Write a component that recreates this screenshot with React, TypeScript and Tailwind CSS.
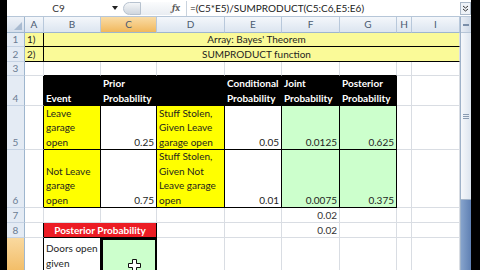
import React from 'react';

const GR = 'border-r-[#d9dde3]';
const GB = 'border-b-[#d9dde3]';
const KR = 'border-r-black';
const KB = 'border-b-black';

interface CellProps {
    r?: string;
    b?: string;
    className?: string;
    children?: React.ReactNode;
}

const Cell: React.FC<CellProps> = ({ r = GR, b = GB, className = '', children }) => (
    <div className={`border-r border-b overflow-hidden flex flex-col justify-end px-[2px] leading-[14.5px] ${r} ${b} ${className}`}>
        {children}
    </div>
);

const RowHead: React.FC<{ n?: string; active?: boolean }> = ({ n, active }) => (
    <div
        className={`border-r border-b border-r-[#9eb6ce] border-b-[#c5d2e3] flex items-end justify-center text-[10px] leading-[14px] text-[#6b7c93] ${
            active ? 'bg-gradient-to-b from-[#f9d99f] to-[#f1b85b]' : 'bg-[#e4ebf4]'
        }`}
    >
        {n}
    </div>
);

const ColHead: React.FC<{ n: string; active?: boolean }> = ({ n, active }) => (
    <div
        className={`border-r border-b border-r-[#b8c8db] border-b-[#9eb6ce] flex items-center justify-center text-[10px] text-[#4a5a70] ${
            active ? 'bg-gradient-to-b from-[#f9dca5] to-[#f1b85b]' : 'bg-gradient-to-b from-[#f4f7fb] to-[#dce5f0]'
        }`}
    >
        {n}
    </div>
);

const Lines: React.FC<{ lines: string[] }> = ({ lines }) => (
    <>
        {lines.map((l, i) => (
            <div key={i} className="whitespace-nowrap">{l}</div>
        ))}
    </>
);

export default function App() {
    return (
        <div
            className="w-[480px] h-[270px] overflow-hidden bg-black flex text-[#1e1e1e]"
            style={{ fontFamily: 'Lato, "Open Sans", sans-serif' }}
        >
            <div className="w-[7px] shrink-0" />
            <div className="w-[464px] shrink-0 flex flex-col bg-white">
                {/* formula bar */}
                <div className="h-[17px] shrink-0 flex items-center border-b border-[#b6c6d8] bg-white">
                    <div className="w-[103px] text-center text-[10px] text-[#333]">C9</div>
                    <div className="w-[10px] flex justify-center">
                        <svg width="6" height="4" viewBox="0 0 6 4"><path d="M0 0h6L3 4z" fill="#222" /></svg>
                    </div>
                    <div className="ml-[3px] w-[18px] h-[13px] rounded-l-full border border-[#b7c2cf] bg-gradient-to-b from-[#f4f6f8] to-[#cfd6de]" />
                    <div className="w-[31px] h-[13px] bg-gradient-to-b from-[#fbfcfd] to-[#e9edf2]" />
                    <div className="w-[14px] text-[10px] italic font-bold text-[#5a5a5a] font-serif">fx</div>
                    <div className="w-px h-[15px] bg-[#c9d3de] mr-[3px]" />
                    <div className="text-[10px] text-[#222] whitespace-nowrap">=(C5*E5)/SUMPRODUCT(C5:C6,E5:E6)</div>
                    <div className="ml-auto w-[11px] h-[13px] border border-[#aab8c8] bg-[#eef2f7] flex items-center justify-center">
                        <svg width="7" height="7" viewBox="0 0 7 7">
                            <path d="M1 1l2.5 2 2.5-2M1 4l2.5 2 2.5-2" stroke="#333" strokeWidth="1" fill="none" />
                        </svg>
                    </div>
                </div>

                <div className="flex flex-1 min-h-0">
                    {/* sheet grid */}
                    <div className="w-[453px] shrink-0 grid grid-cols-[18px_19px_57px_56px_68px_57px_58px_57px_15px_48px] grid-rows-[16px_14px_15px_14px_30px_44px_58px_15px_15px_40px] text-[10px]">
                        {/* header */}
                        <div className="border-r border-b border-r-[#9eb6ce] border-b-[#9eb6ce] bg-gradient-to-b from-[#eef2f8] to-[#d5dfec] relative">
                            <svg className="absolute right-[2px] bottom-[2px]" width="8" height="8" viewBox="0 0 8 8"><path d="M8 0v8H0z" fill="#a9bbd1" /></svg>
                        </div>
                        <ColHead n="A" />
                        <ColHead n="B" />
                        <ColHead n="C" active />
                        <ColHead n="D" />
                        <ColHead n="E" />
                        <ColHead n="F" />
                        <ColHead n="G" />
                        <ColHead n="H" />
                        <ColHead n="I" />

                        {/* row 1 */}
                        <RowHead n="1" />
                        <Cell r={KR} b={KB} className="bg-[#fafa98]">1)</Cell>
                        <Cell b={KB} className="col-span-8 bg-[#fafa98] items-center pl-[12px]">Array: Bayes' Theorem</Cell>

                        {/* row 2 */}
                        <RowHead n="2" />
                        <Cell r={KR} b={KB} className="bg-[#fafa98]">2)</Cell>
                        <Cell b={KB} className="col-span-8 bg-[#fafa98] items-center pl-[12px]">SUMPRODUCT function</Cell>

                        {/* row 3 */}
                        <RowHead n="3" />
                        <Cell />
                        <Cell b={KB} />
                        <Cell b={KB} />
                        <Cell b={KB} />
                        <Cell b={KB} />
                        <Cell b={KB} />
                        <Cell b={KB} />
                        <Cell />
                        <Cell />

                        {/* row 4 */}
                        <RowHead n="4" />
                        <Cell r={KR} />
                        <Cell r={KR} b={KB} className="bg-black text-white font-bold">Event</Cell>
                        <Cell r={KR} b={KB} className="bg-black text-white font-bold"><Lines lines={['Prior', 'Probability']} /></Cell>
                        <Cell r={KR} b={KB} className="bg-black" />
                        <Cell r={KR} b={KB} className="bg-black text-white font-bold"><Lines lines={['Conditional', 'Probability']} /></Cell>
                        <Cell r={KR} b={KB} className="bg-black text-white font-bold"><Lines lines={['Joint', 'Probability']} /></Cell>
                        <Cell r={KR} b={KB} className="bg-black text-white font-bold"><Lines lines={['Posterior', 'Probability']} /></Cell>
                        <Cell />
                        <Cell />

                        {/* row 5 */}
                        <RowHead n="5" />
                        <Cell r={KR} />
                        <Cell r={KR} b={KB} className="bg-[#ffff00]"><Lines lines={['Leave', 'garage', 'open']} /></Cell>
                        <Cell r={KR} b={KB} className="items-end">0.25</Cell>
                        <Cell r={KR} b={KB} className="bg-[#ffff00]"><Lines lines={['Stuff Stolen,', 'Given Leave', 'garage open']} /></Cell>
                        <Cell r={KR} b={KB} className="items-end">0.05</Cell>
                        <Cell r={KR} b={KB} className="bg-[#ccffcc] items-end">0.0125</Cell>
                        <Cell r={KR} b={KB} className="bg-[#ccffcc] items-end">0.625</Cell>
                        <Cell />
                        <Cell />

                        {/* row 6 */}
                        <RowHead n="6" />
                        <Cell r={KR} />
                        <Cell r={KR} b={KB} className="bg-[#ffff00]"><Lines lines={['Not Leave', 'garage', 'open']} /></Cell>
                        <Cell r={KR} b={KB} className="items-end">0.75</Cell>
                        <Cell r={KR} b={KB} className="bg-[#ffff00]"><Lines lines={['Stuff Stolen,', 'Given Not', 'Leave garage', 'open']} /></Cell>
                        <Cell r={KR} b={KB} className="items-end">0.01</Cell>
                        <Cell r={KR} b={KB} className="bg-[#ccffcc] items-end">0.0075</Cell>
                        <Cell r={KR} b={KB} className="bg-[#ccffcc] items-end">0.375</Cell>
                        <Cell />
                        <Cell />

                        {/* row 7 */}
                        <RowHead n="7" />
                        <Cell />
                        <Cell />
                        <Cell />
                        <Cell />
                        <Cell />
                        <Cell className="items-end text-[#333]">0.02</Cell>
                        <Cell />
                        <Cell />
                        <Cell />

                        {/* row 8 */}
                        <RowHead n="8" />
                        <Cell r={KR} />
                        <Cell r={KR} b={KB} className="col-span-2 bg-[#ec1c24] text-white font-bold items-center">Posterior Probability</Cell>
                        <Cell />
                        <Cell />
                        <Cell className="items-end text-[#333]">0.02</Cell>
                        <Cell />
                        <Cell />
                        <Cell />

                        {/* row 9 (number sits below the visible area) */}
                        <RowHead active />
                        <Cell r={KR} />
                        <Cell r={KR} className="justify-start pt-[3px]"><Lines lines={['Doors open', 'given']} /></Cell>
                        <div className="relative border-2 border-black bg-[#ccffcc]">
                            <svg className="absolute left-[25px] top-[19px]" width="13" height="13" viewBox="0 0 13 13">
                                <path d="M4.5 0.5h4v4h4v4h-4v4h-4v-4h-4v-4h4z" fill="#fff" stroke="#111" strokeWidth="1" />
                            </svg>
                        </div>
                        <Cell />
                        <Cell />
                        <Cell />
                        <Cell />
                        <Cell />
                        <Cell />
                    </div>

                    {/* vertical scrollbar */}
                    <div className="w-[11px] shrink-0 flex flex-col border-l border-[#9fb2c9] bg-[#e9eef5]">
                        <div className="h-[16px] border-b border-[#b6c5d7] bg-gradient-to-r from-[#e9eef5] to-[#cdd8e6] flex items-center justify-center">
                            <div className="w-[6px] h-[2px] bg-[#7a8ea8]" />
                        </div>
                        <div className="h-[167px] border-b border-[#a5b6cb] bg-gradient-to-r from-[#f6f8fb] to-[#dde5ef] flex items-center justify-center">
                            <div className="flex flex-col gap-[1px]">
                                <div className="w-[6px] h-px bg-[#8a9bb1]" />
                                <div className="w-[6px] h-px bg-[#8a9bb1]" />
                                <div className="w-[6px] h-px bg-[#8a9bb1]" />
                            </div>
                        </div>
                        <div className="flex-1 bg-gradient-to-r from-[#86a3cc] to-[#5f80b3]" />
                    </div>
                </div>
            </div>
            <div className="w-[9px] shrink-0" />
        </div>
    );
}
